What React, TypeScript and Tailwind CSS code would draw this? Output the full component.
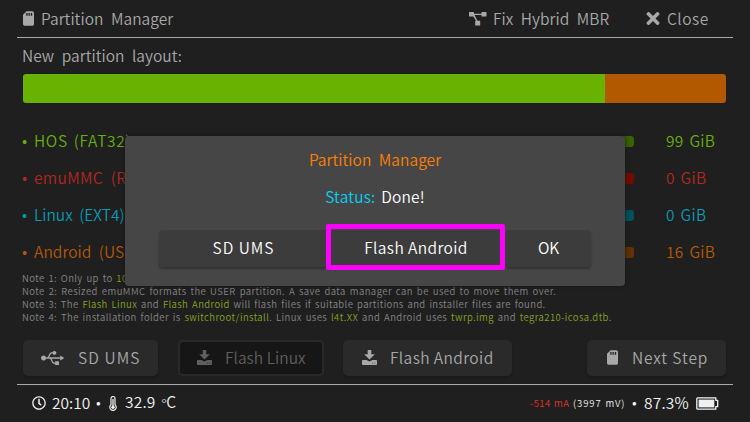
import React from "react";
import { FaSdCard, FaTimes, FaUsb, FaRegClock } from "react-icons/fa";

const partitions = [
  { name: "HOS (FAT32)", size: "99 GiB", text: "text-[#68ae0c]", knob: "bg-[#376300]", spacing: "tracking-[0.65px] [word-spacing:2px]" },
  { name: "emuMMC (RAW)", size: "0 GiB", text: "text-[#b12820]", knob: "bg-[#730b00]", spacing: "tracking-[0.35px]" },
  { name: "Linux (EXT4)", size: "0 GiB", text: "text-[#0898b2]", knob: "bg-[#00505f]", spacing: "tracking-[0px] [word-spacing:3px]" },
  { name: "Android (USER)", size: "16 GiB", text: "text-[#b35a05]", knob: "bg-[#623200]", spacing: "tracking-[0.05px]" },
];

function Hi({ children }: { children: React.ReactNode }) {
  return <span className="text-[#84a222]">{children}</span>;
}

function DiagramIcon() {
  return (
    <svg width="18" height="14" viewBox="0 0 18 14" fill="currentColor" className="shrink-0">
      <rect x="0" y="0" width="5" height="4.600" rx=".6" />
      <rect x="12.500" y="0" width="5" height="4.600" rx=".6" />
      <rect x="6.200" y="8.800" width="5" height="4.800" rx=".6" />
      <path d="M4.500 1.800h8.500v1.300H5.600l2.900 5.900H7.100L3.500 3z" />
    </svg>
  );
}

function FlashIcon() {
  return (
    <svg width="15" height="15" viewBox="0 0 15 15" fill="currentColor" className="shrink-0">
      <path d="M5.700 0h3.600v4.300H12.800L7.500 9.500 2.200 4.300h3.500z" />
      <path fillRule="evenodd" d="M.8 10h3.700l3 1.400L10.500 10h3.700q.8 0 .8.8v3.400q0 .8-.8.8H.8q-.8 0-.8-.8v-3.400Q0 10 .8 10zM10.200 12.800v.8h.9v-.8zm2.200 0v.8h.9v-.8z" />
    </svg>
  );
}

function Thermometer() {
  return (
    <svg width="8" height="15" viewBox="0 0 8 15" fill="none" className="shrink-0">
      <path d="M2 8.700V2.500a2 2 0 0 1 4 0v6.200a3.200 3.200 0 1 1-4 0z" stroke="#f0f0f0" strokeWidth="1.200" />
      <path d="M4 3v8" stroke="#d8d8d8" strokeWidth="1.500" />
      <circle cx="4" cy="11.200" r="1.700" fill="#f0f0f0" />
    </svg>
  );
}

function Battery() {
  return (
    <svg width="23" height="13" viewBox="0 0 23 13" fill="none" className="shrink-0">
      <path d="M1.700.8h18.100v2.500h1.900v6.400h-1.900v2.500H1.700q-.9 0-.9-.9V1.700q0-.9.9-.9z" stroke="#f5f5f5" strokeWidth="1.300" strokeLinejoin="round" />
      <path d="M2.600 2.600h15.700v7.800H2.600z" fill="#f0f0f0" />
    </svg>
  );
}

const action = "flex h-9 items-center rounded-[5px] bg-[#2a2a2a] shadow-[0_2px_2px_#1a1a1a]";
const dialogButton = "flex h-[37px] items-center justify-center rounded-[4px] bg-[#3c3c3c] pb-1 shadow-[0_2px_2px_#333]";

export default function App() {
  return (
    <main className="relative h-[422px] w-[750px] overflow-hidden bg-[#1f1f1f] font-['Noto_Sans_CJK_JP','Noto_Sans',sans-serif] text-[15.500px] leading-5 font-[350] tracking-[0.05px] whitespace-nowrap text-[#a8a8a8] [word-spacing:4px]">
      <header className="mx-[17px] flex h-[38px] items-center border-b border-[#aaa] pl-1.5">
        <FaSdCard className="h-[15px] w-[11px]" />
        <span className="ml-[7px] w-[428px] pb-0.5">Partition Manager</span>
        <DiagramIcon />
        <span className="ml-[6px] w-[153px] pb-0.5">Fix Hybrid MBR</span>
        <FaTimes className="h-[19px] w-[14px]" />
        <span className="ml-[7px] pb-0.5 tracking-[0.5px]">Close</span>
      </header>

      <section className="px-[22px]">
        <h2 className="h-9 pt-[7px]">New partition layout:</h2>
        <div className="ml-px flex h-[29px] w-[703px] overflow-hidden rounded-[3px]">
          <div className="w-[582px] bg-[#68b200]" />
          <div className="flex-1 bg-[#b25900]" />
        </div>
        <ul className="mt-5">
          {partitions.map((p) => (
            <li key={p.name} className={`flex h-[37px] items-center ${p.text}`}>
              <span className="w-3 pb-[3px] tracking-normal">•</span>
              <span className={`w-[570px] pb-[3px] ${p.spacing}`}>{p.name}</span>
              <span className={`h-[11px] w-[30px] rounded-[3px] ${p.knob}`} />
              <span className="ml-8 pb-[3px] tracking-[0.3px] [word-spacing:2px]">{p.size}</span>
            </li>
          ))}
        </ul>
        <div className="mt-[1px] text-[9.500px] leading-[12.900px] tracking-[0.4px] text-[#858585] [word-spacing:1.3px]">
          <p className="tracking-[0.4px]">Note 1: Only up to <Hi>10</Hi></p>
          <p className="tracking-[0.46px]">Note 2: Resized emuMMC formats the USER partition. A save data manager can be used to move them over.</p>
          <p>Note 3: The <Hi>Flash Linux</Hi> and <Hi>Flash Android</Hi> will flash files if suitable partitions and installer files are found.</p>
          <p className="tracking-[0.42px]">Note 4: The installation folder is <Hi>switchroot/install</Hi>. Linux uses <Hi>l4t.XX</Hi> and Android uses <Hi>twrp.img</Hi> and <Hi>tegra210-icosa.dtb</Hi>.</p>
        </div>
        <div className="mt-[16px] ml-px flex w-[703px]">
          <button className={`${action} w-[135px] pl-[18px]`}><FaUsb className="h-[22px] w-[23px]" /><span className="ml-[14px] pb-0.5 tracking-[1.1px]">SD UMS</span></button>
          <button className="ml-5 flex h-9 w-[146px] items-center rounded-[5px] border-2 border-[#292929] bg-[#161616] pl-[17px] text-[#5f5f5f]"><FlashIcon /><span className="ml-[13px] pb-0.5">Flash Linux</span></button>
          <button className={`${action} ml-[19px] w-[169px] pl-[19px]`}><FlashIcon /><span className="ml-[13px] pb-0.5 tracking-[0.4px]">Flash Android</span></button>
          <button className={`${action} ml-auto w-[139px] pl-5`}><FaSdCard className="h-[15px] w-[11px]" /><span className="ml-[14px] pb-0.5 tracking-[0.9px]">Next Step</span></button>
        </div>
      </section>

      <footer className="mx-[17px] mt-2 flex h-[38px] items-center border-t border-[#aaa] pl-[15px] tracking-normal text-[#f2f2f2] [word-spacing:1px]">
        <FaRegClock className="size-[14px] shrink-0" />
        <span className="ml-1.5 w-[44px] shrink-0 pb-0.5">20:10</span>
        <span className="w-[13px] shrink-0 pb-0.5 text-[14px]">•</span>
        <Thermometer />
        <span className="ml-2 w-[405px] shrink-0 pb-0.5 tracking-[0.2px] [word-spacing:2px]">32.9 <span className="font-['Noto_Sans',sans-serif] text-[13px] tracking-[-0.5px]">°</span>C</span>
        <span className="w-[43px] shrink-0 pb-px text-[9.500px] tracking-[0.4px] text-[#e33327]">-514 mA</span>
        <span className="w-[59px] shrink-0 pb-px text-[9.500px] tracking-[0.9px]">(3997 mV)</span>
        <span className="w-[12px] shrink-0 pb-0.5 text-[14px]">•</span>
        <span className="w-[52px] shrink-0 pb-0.5 tracking-[0.2px]">87.3%</span>
        <Battery />
      </footer>

      <div role="dialog" className="absolute top-[136px] left-[125px] flex h-[150px] w-[500px] flex-col items-center rounded-[4px] bg-[#464646] pt-[13px] text-white shadow-[0_0_4px_#151515]">
        <h1 className="text-[#ff8000]">Partition Manager</h1>
        <p className="mt-[17px] tracking-[0.2px] [word-spacing:2px]"><span className="text-[#00d4f4]">Status:</span> Done!</p>
        <div className="mt-[24px] flex w-[432px]">
          <button className={`${dialogButton} w-[169px] tracking-[1px]`}>SD UMS</button>
          <button className={`${dialogButton} w-[176px] tracking-[0.4px]`}>Flash Android</button>
          <button className={`${dialogButton} ml-[2px] w-[85px] tracking-[-0.2px]`}>OK</button>
        </div>
        <div className="absolute top-[88px] left-[201px] h-[46px] w-[179px] rounded-[2px] border-[5px] border-[#ff00ff]" />
      </div>
    </main>
  );
}
